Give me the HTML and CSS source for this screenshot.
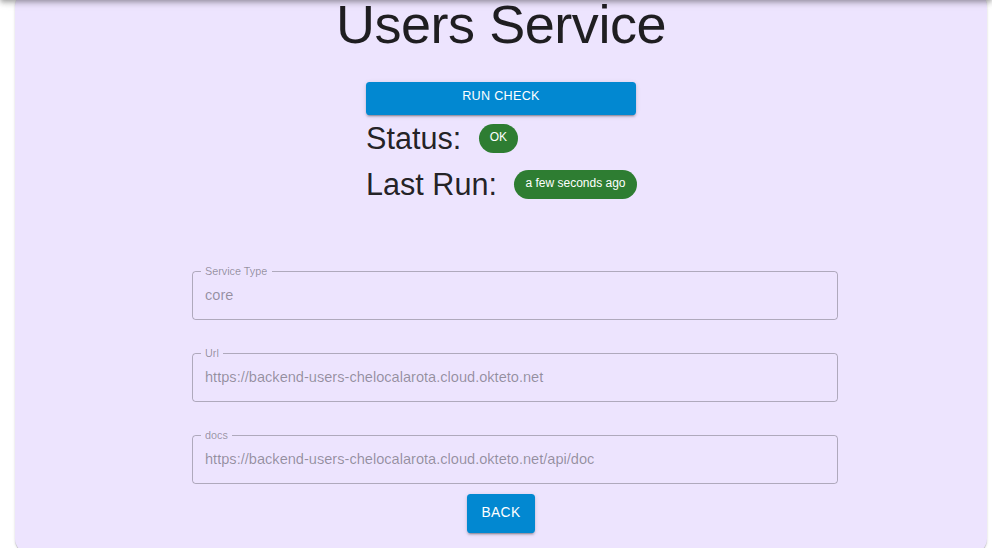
FILE: index.html
```html
<!DOCTYPE html>
<html lang="en">
<head>
<meta charset="utf-8">
<title>Users Service</title>
<link rel="stylesheet" href="styles.css">
</head>
<body>
<header class="appbar"></header>
<main class="page">
  <section class="card">
    <h2 class="title">Users Service</h2>
    <div class="summary">
      <button class="btn btn-wide" type="button">Run Check</button>
      <div class="info-row row-status">
        <span class="info-label">Status:</span>
        <span class="chip">OK</span>
      </div>
      <div class="info-row row-last">
        <span class="info-label">Last Run:</span>
        <span class="chip">a few seconds ago</span>
      </div>
    </div>
    <form class="form">
      <div class="field">
        <span class="field-label">Service Type</span>
        <span class="field-value">core</span>
      </div>
      <div class="field">
        <span class="field-label">Url</span>
        <span class="field-value">https://backend-users-chelocalarota.cloud.okteto.net</span>
      </div>
      <div class="field">
        <span class="field-label">docs</span>
        <span class="field-value">https://backend-users-chelocalarota.cloud.okteto.net/api/doc</span>
      </div>
    </form>
    <button class="btn btn-back" type="button">Back</button>
  </section>
</main>
</body>
</html>
```

FILE: styles.css
```css
* { box-sizing: border-box; }

html, body {
  margin: 0;
  padding: 0;
  background: #ffffff;
  font-family: "Liberation Sans", Arial, Helvetica, sans-serif;
  color: rgba(0, 0, 0, 0.87);
}

.appbar {
  position: fixed;
  top: -64px;
  left: 0;
  right: 0;
  height: 64px;
  background: #ffffff;
  box-shadow: 0px 2px 4px -1px rgba(0,0,0,0.2), 0px 4px 5px 0px rgba(0,0,0,0.14), 0px 1px 10px 0px rgba(0,0,0,0.12);
  z-index: 10;
}

.page {
  padding: 0 5px 0 15px;
}

.card {
  margin-top: -8px;
  background: #ede4fe;
  border-radius: 14px;
  box-shadow: 0px 2px 1px -1px rgba(0,0,0,0.2), 0px 1px 1px 0px rgba(0,0,0,0.14), 0px 1px 3px 0px rgba(0,0,0,0.12);
  display: flex;
  flex-direction: column;
  align-items: center;
  padding: 0 0 20px;
}

.title {
  margin: 0;
  font-size: 54px;
  line-height: 65px;
  font-weight: 400;
  letter-spacing: -0.45px;
  color: rgba(0, 0, 0, 0.87);
}

.summary {
  width: 270px;
  margin-top: 25px;
  display: flex;
  flex-direction: column;
}

.btn {
  border: none;
  background: #0288d1;
  color: #ffffff;
  font-family: "Liberation Sans", Arial, Helvetica, sans-serif;
  text-transform: uppercase;
  border-radius: 3.6px;
  box-shadow: 0px 3px 1px -2px rgba(0,0,0,0.2), 0px 2px 2px 0px rgba(0,0,0,0.14), 0px 1px 5px 0px rgba(0,0,0,0.12);
  display: flex;
  align-items: center;
  justify-content: center;
  cursor: pointer;
}

.btn-wide {
  width: 100%;
  height: 33px;
  font-size: 12.6px;
  letter-spacing: 0.3px;
  padding: 0 0 5px;
}

.info-row {
  display: flex;
  align-items: center;
  height: 37px;
  white-space: nowrap;
}

.row-status { margin-top: 5px; }
.row-last { margin-top: 9px; }

.info-label {
  flex-shrink: 0;
  font-size: 30.6px;
  line-height: 37px;
  white-space: nowrap;
  color: rgba(0, 0, 0, 0.87);
}

.chip {
  flex-shrink: 0;
  margin-left: 17.5px;
  height: 28.8px;
  border-radius: 14.4px;
  background: #2e7d32;
  color: #ffffff;
  font-size: 12px;
  padding: 0 11px 2px;
  display: inline-flex;
  align-items: center;
  white-space: nowrap;
}

.form {
  width: 646px;
  margin: 68px 0 0 28px;
  display: flex;
  flex-direction: column;
  gap: 33px;
}

.field {
  position: relative;
  height: 49px;
  border: 1px solid rgba(0, 0, 0, 0.26);
  border-radius: 3.6px;
  display: flex;
  align-items: center;
  padding: 0 12px 1px;
}

.field-label {
  position: absolute;
  top: -7.5px;
  left: 7.5px;
  padding: 0 4.5px;
  background: #ede4fe;
  font-size: 10.8px;
  line-height: 13px;
  color: rgba(0, 0, 0, 0.38);
}

.field-value {
  font-size: 14.6px;
  color: rgba(0, 0, 0, 0.38);
  white-space: nowrap;
}

.btn-back {
  margin-top: 10px;
  height: 39px;
  padding: 0 15px 3px;
  font-size: 13.8px;
  letter-spacing: 0.3px;
}
```
